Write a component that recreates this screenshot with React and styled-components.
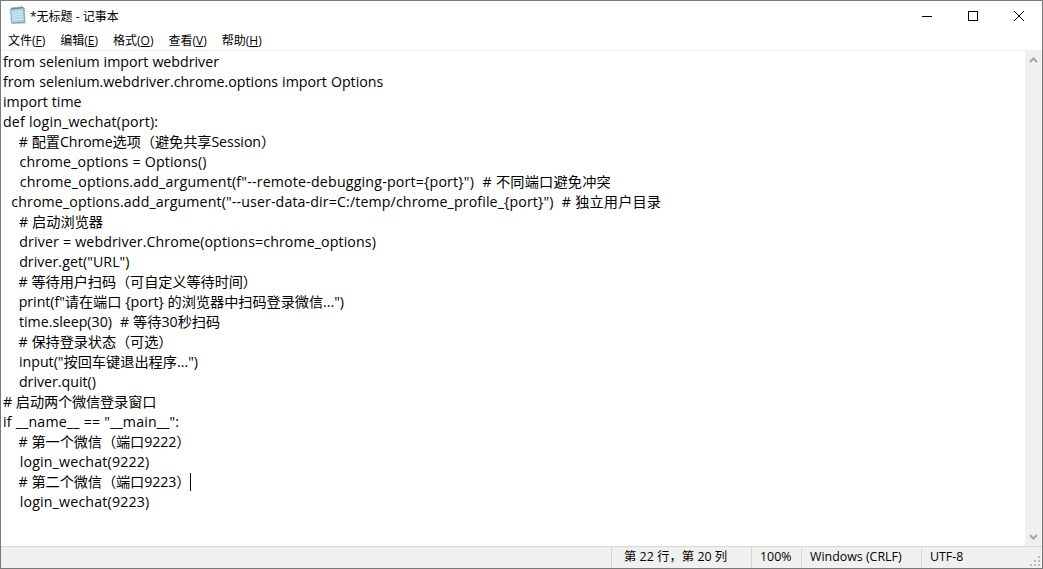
import React from 'react'
import styled, { createGlobalStyle } from 'styled-components'

const uiFont = `"Open Sans", "Noto Sans CJK SC", sans-serif`

// second value nudges letter-spacing so each line ends where it does in the original
const lines = [
  ['from selenium import webdriver', 0],
  ['from selenium.webdriver.chrome.options import Options', 0],
  ['import time', 0],
  ['def login_wechat(port):', 0.17],
  ['    # 配置Chrome选项（避免共享Session）', -0.07],
  ['    chrome_options = Options()', 0.13],
  ['    chrome_options.add_argument(f"--remote-debugging-port={port}")  # 不同端口避免冲突', 0.19],
  ['  chrome_options.add_argument("--user-data-dir=C:/temp/chrome_profile_{port}")  # 独立用户目录', 0.125],
  ['    # 启动浏览器', 0],
  ['    driver = webdriver.Chrome(options=chrome_options)', 0.1],
  ['    driver.get("URL")', 0.05],
  ['    # 等待用户扫码（可自定义等待时间）', -0.1],
  ['    print(f"请在端口 {port} 的浏览器中扫码登录微信...")', -0.05],
  ['    time.sleep(30)  # 等待30秒扫码', 0],
  ['    # 保持登录状态（可选）', -0.1],
  ['    input("按回车键退出程序...")', 0],
  ['    driver.quit()', 0],
  ['# 启动两个微信登录窗口', -0.15],
  ['if __name__ == "__main__":', 0.15],
  ['    # 第一个微信（端口9222）', -0.1],
  ['    login_wechat(9222)', 0.18],
  ['    # 第二个微信（端口9223）', -0.1],
  ['    login_wechat(9223)', 0.18],
]

const menus = [
  ['文件(', 'F', ')'],
  ['编辑(', 'E', ')'],
  ['格式(', 'O', ')'],
  ['查看(', 'V', ')'],
  ['帮助(', 'H', ')'],
]

const GlobalStyle = createGlobalStyle`
  html, body {
    margin: 0;
    padding: 0;
    background: #fff;
  }
`

const Window = styled.div`
  display: flex;
  flex-direction: column;
  box-sizing: border-box;
  width: 1043px;
  height: 569px;
  border: 1px solid #7a7a7a;
  background: #fff;
  font-family: ${uiFont};
  color: #000;
  overflow: hidden;
`

const TitleBar = styled.div`
  display: flex;
  align-items: center;
  height: 29px;
  flex: none;
`

const AppIcon = styled.svg`
  width: 17px;
  height: 19px;
  margin-left: 8px;
  margin-right: 4px;
`

const Title = styled.div`
  flex: 1;
  font-size: 12px;
  padding-top: 1px;
`

const WindowButton = styled.div`
  width: 46px;
  height: 29px;
  display: flex;
  align-items: center;
  justify-content: center;
`

const MenuBar = styled.div`
  display: flex;
  height: 20px;
  flex: none;
  padding-left: 7px;
  gap: 15px;
  align-items: center;
`

const MenuItem = styled.div`
  font-size: 12px;
  white-space: pre;

  u {
    text-underline-offset: 1px;
  }
`

const Body = styled.div`
  flex: 1;
  display: flex;
  min-height: 0;
  border-top: 1px solid #f0f0f0;
`

const TextArea = styled.div`
  flex: 1;
  padding: 1px 0 0 2px;
  overflow: hidden;
`

const Line = styled.div`
  height: 20px;
  line-height: 20px;
  font-size: 14.2px;
  word-spacing: 0.3px;
  letter-spacing: ${p => p.$track}px;
  white-space: pre;
`

const Caret = styled.span`
  display: inline-block;
  width: 1px;
  height: 18px;
  background: #000;
  vertical-align: -4px;
`

const ScrollBar = styled.div`
  width: 17px;
  flex: none;
  background: #f0f0f0;
  display: flex;
  flex-direction: column;
  justify-content: space-between;
  align-items: center;
  padding: 6px 0;
  box-sizing: border-box;
`

const StatusBar = styled.div`
  display: flex;
  height: 22px;
  flex: none;
  background: #f0f0f0;
  border-top: 1px solid #d7d7d7;
  box-sizing: border-box;
  font-size: 12.4px;
  position: relative;
`

const StatusSpacer = styled.div`
  width: 610px;
  flex: none;
`

const StatusCell = styled.div`
  width: ${p => p.$width}px;
  flex: none;
  box-sizing: border-box;
  border-left: 1px solid #d7d7d7;
  padding-left: ${p => p.$pad}px;
  line-height: 20px;
  white-space: pre;
`

const Grip = styled.svg`
  position: absolute;
  right: 1px;
  bottom: 1px;
  width: 12px;
  height: 12px;
`

export default function App() {
  return (
    <Window>
      <GlobalStyle />
      <TitleBar>
        <AppIcon viewBox="0 0 17 19">
          <path d="M3 3 L16 2 L16.5 17.5 L3 18 Z" fill="#c9b98a" />
          <path d="M1.5 3 L14.5 1.5 L15.5 16 L2.5 17 Z" fill="#a6d4e4" stroke="#6fa3ba" strokeWidth="0.8" />
          <path d="M3 6.5 L14 5.5 M3.2 9 L14.2 8 M3.4 11.5 L14.4 10.5 M3.6 14 L14.6 13" stroke="#d9eef6" strokeWidth="1" />
          <path d="M2.5 2.6 L14 1.2" stroke="#4a5a66" strokeWidth="2" strokeDasharray="1 1" />
        </AppIcon>
        <Title>*无标题 - 记事本</Title>
        <WindowButton>
          <svg width="10" height="10" viewBox="0 0 10 10">
            <path d="M0 5.5 H10" stroke="#000" strokeWidth="1" />
          </svg>
        </WindowButton>
        <WindowButton>
          <svg width="10" height="10" viewBox="0 0 10 10">
            <rect x="0.5" y="0.5" width="9" height="9" fill="none" stroke="#000" strokeWidth="1" />
          </svg>
        </WindowButton>
        <WindowButton>
          <svg width="10" height="10" viewBox="0 0 10 10">
            <path d="M0 0 L10 10 M10 0 L0 10" stroke="#000" strokeWidth="1" />
          </svg>
        </WindowButton>
      </TitleBar>
      <MenuBar>
        {menus.map(([a, key, b]) => (
          <MenuItem key={key}>
            {a}<u>{key}</u>{b}
          </MenuItem>
        ))}
      </MenuBar>
      <Body>
        <TextArea>
          {lines.map(([text, track], i) => (
            <Line key={i} $track={track}>
              {text}
              {i === 21 && <Caret />}
            </Line>
          ))}
        </TextArea>
        <ScrollBar>
          <svg width="9" height="6" viewBox="0 0 9 6">
            <path d="M1 5 L4.5 1.5 L8 5" fill="none" stroke="#a6a6a6" strokeWidth="2" />
          </svg>
          <svg width="9" height="6" viewBox="0 0 9 6">
            <path d="M1 1 L4.5 4.5 L8 1" fill="none" stroke="#a6a6a6" strokeWidth="2" />
          </svg>
        </ScrollBar>
      </Body>
      <StatusBar>
        <StatusSpacer />
        <StatusCell $width={140} $pad={12}>第 22 行，第 20 列</StatusCell>
        <StatusCell $width={50} $pad={8}>100%</StatusCell>
        <StatusCell $width={120} $pad={8}>Windows (CRLF)</StatusCell>
        <StatusCell $width={120} $pad={8}>UTF-8</StatusCell>
        <Grip viewBox="0 0 12 12">
          <path d="M9 1h2v2H9zM5 5h2v2H5zM9 5h2v2H9zM1 9h2v2H1zM5 9h2v2H5zM9 9h2v2H9z" fill="#b8b8b8" />
        </Grip>
      </StatusBar>
    </Window>
  )
}
